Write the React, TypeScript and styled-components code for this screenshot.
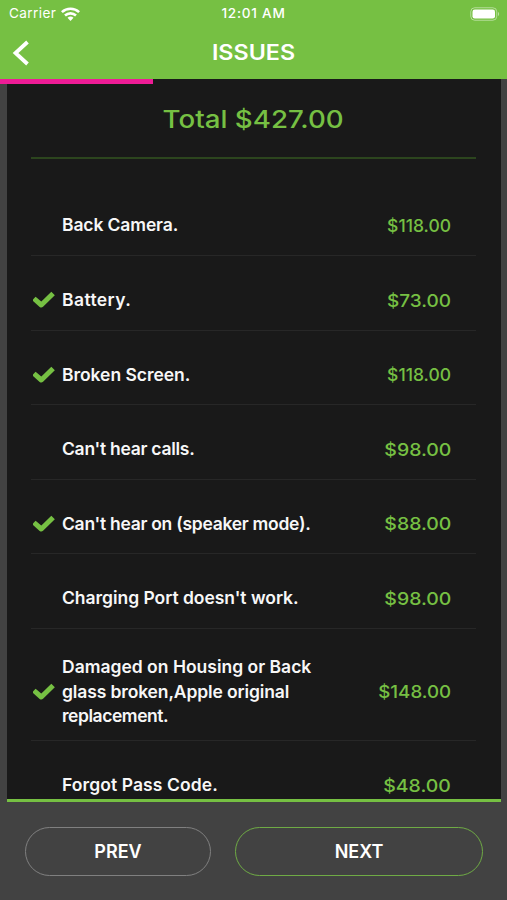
import React from "react";
import styled, { createGlobalStyle } from "styled-components";

const GREEN = "#76c043";

const GlobalStyle = createGlobalStyle`
  * { box-sizing: border-box; }
  body { margin: 0; background: #424242; font-family: "Inter", "Liberation Sans", sans-serif; }
`;

const Screen = styled.div`
  width: 507px;
  height: 900px;
  display: flex;
  flex-direction: column;
  overflow: hidden;
  background: #424242;
`;

const Header = styled.header`
  flex: none;
  height: 79px;
  background: ${GREEN};
  color: #fff;
`;

const StatusBar = styled.div`
  display: grid;
  grid-template-columns: 1fr auto 1fr;
  align-items: center;
  height: 27px;
  padding: 0 7px 0 9px;
  font: 500 13.6px/27px "Inter", sans-serif;
`;

const Carrier = styled.div`
  display: flex;
  align-items: center;
  gap: 5px;
  font-weight: 400;
  letter-spacing: 0.38px;
`;

const Clock = styled.div`
  margin-left: -2px;
  letter-spacing: 0.75px;
`;

const BatterySlot = styled.div`
  display: flex;
  justify-content: flex-end;
`;

const TitleBar = styled.div`
  display: grid;
  grid-template-columns: 40px 1fr 40px;
  align-items: center;
  height: 50px;
`;

const BackButton = styled.button`
  display: flex;
  padding: 0 0 0 12px;
  border: 0;
  background: none;
`;

const Title = styled.h1`
  margin: 0;
  text-align: center;
  font-size: 21px;
  font-weight: 600;
  line-height: 51px;
`;

const Content = styled.main`
  flex: none;
  height: 723px;
  margin: 0 6px 0 7px;
  padding: 0 25px 0 24px;
  border-bottom: 3px solid ${GREEN};
  background: #191919;
  overflow: hidden;
`;

const Progress = styled.div`
  position: absolute;
  z-index: 1;
  top: 79px;
  left: 0;
  width: 153px;
  height: 5px;
  background: #ee1c96;
`;

const Total = styled.div`
  height: 80px;
  border-bottom: 2px solid #2c451e;
  color: ${GREEN};
  text-align: center;
  font-size: 24.5px;
  font-weight: 500;
  line-height: 80px;
`;

const List = styled.ul`
  margin: 0;
  padding: 22.6px 0 0;
  list-style: none;
`;

const Row = styled.li`
  display: grid;
  grid-template-columns: 31px 270px 1fr;
  align-items: center;
  min-height: 74.55px;
  padding: 26.3px 25px 11.7px 0;
  border-bottom: 1px solid #272727;
`;

const CheckSlot = styled.div`
  display: flex;
  padding-left: 2px;
`;

const Label = styled.div`
  color: #f7f7f7;
  font-size: 17.5px;
  font-weight: 600;
  line-height: 24.5px;
`;

const Line = styled.span<{ $spacing: number }>`
  display: block;
  white-space: nowrap;
  letter-spacing: ${(p) => p.$spacing}px;
`;

const Wide = styled.span<{ $stretch: number; $origin?: string }>`
  display: inline-block;
  transform: scaleX(${(p) => p.$stretch});
  transform-origin: ${(p) => p.$origin ?? "center"};
`;

const Price = styled.div`
  color: ${GREEN};
  text-align: right;
  white-space: nowrap;
  font-size: 17.5px;
  font-weight: 550;
`;

const Footer = styled.footer`
  display: grid;
  grid-template-columns: 186px 248px;
  gap: 24px;
  padding: 25px 24px 24px 25px;
`;

const PillButton = styled.button<{ $primary?: boolean }>`
  height: 49px;
  padding: 0;
  border: 1.5px solid ${(p) => (p.$primary ? "#6fab45" : "#808080")};
  border-radius: 25px;
  background: transparent;
  color: #fff;
  font: 600 18px "Inter", sans-serif;
`;

const Check = () => (
  <svg width="22" height="18" viewBox="0 0 22 18">
    <path d="M2.8 9.2 8.3 14 18.3 4.2" fill="none" stroke={GREEN} strokeWidth="5" strokeLinejoin="round" strokeLinecap="square" />
  </svg>
);

const Wifi = () => (
  <svg width="19" height="14" viewBox="0 0 19 14" fill="none" stroke="#fff" strokeWidth="2.6">
    <path d="M.9 5.1C5.7.6 13.3.6 18.1 5.1" />
    <path d="M4 8.5C7.2 5.6 11.8 5.6 15 8.5" />
    <path d="M6.5 10.8Q9.5 8.1 12.5 10.8L9.5 13.9Z" fill="#fff" stroke="none" />
  </svg>
);

const Battery = () => (
  <svg width="30" height="14" viewBox="0 0 30 14">
    <rect x=".75" y=".75" width="26" height="12.5" rx="4" fill="none" stroke="#fff" strokeOpacity=".45" />
    <rect x="2.5" y="2.5" width="22.5" height="9" rx="2.3" fill="#fff" />
    <path d="M28 5v4c1.5-.5 1.5-3.5 0-4" fill="#fff" fillOpacity=".5" />
  </svg>
);

interface Issue {
  lines: { text: string; spacing: number }[];
  price: string;
  stretch: number;
  checked?: boolean;
}

const issues: Issue[] = [
  { lines: [{ text: "Back Camera.", spacing: -0.12 }], price: "$118.00", stretch: 1 },
  { lines: [{ text: "Battery.", spacing: 0.4 }], price: "$73.00", stretch: 1.085, checked: true },
  { lines: [{ text: "Broken Screen.", spacing: -0.05 }], price: "$118.00", stretch: 1, checked: true },
  { lines: [{ text: "Can't hear calls.", spacing: -0.27 }], price: "$98.00", stretch: 1.11 },
  { lines: [{ text: "Can't hear on (speaker mode).", spacing: -0.28 }], price: "$88.00", stretch: 1.11, checked: true },
  { lines: [{ text: "Charging Port doesn't work.", spacing: -0.04 }], price: "$98.00", stretch: 1.11 },
  {
    lines: [
      { text: "Damaged on Housing or Back", spacing: 0 },
      { text: "glass broken,Apple original", spacing: -0.13 },
      { text: "replacement.", spacing: -0.45 },
    ],
    price: "$148.00",
    stretch: 1.07,
    checked: true,
  },
  { lines: [{ text: "Forgot Pass Code.", spacing: 0.09 }], price: "$48.00", stretch: 1.11 },
];

export default function App() {
  return (
    <Screen>
      <GlobalStyle />
      <Header>
        <StatusBar>
          <Carrier>Carrier <Wifi /></Carrier>
          <Clock>12:01 AM</Clock>
          <BatterySlot><Battery /></BatterySlot>
        </StatusBar>
        <TitleBar>
          <BackButton aria-label="Back">
            <svg width="18" height="26" viewBox="0 0 18 26">
              <path d="M15.5 2 3.5 13l12 11" fill="none" stroke="#fff" strokeWidth="3.8" />
            </svg>
          </BackButton>
          <Title><Wide $stretch={1.11}>ISSUES</Wide></Title>
        </TitleBar>
      </Header>
      <Progress />
      <Content>
        <Total><Wide $stretch={1.13}>Total $427.00</Wide></Total>
        <List>
          {issues.map((issue) => (
            <Row key={issue.lines[0].text}>
              <CheckSlot>{issue.checked && <Check />}</CheckSlot>
              <Label>
                {issue.lines.map((line) => (
                  <Line key={line.text} $spacing={line.spacing}>{line.text}</Line>
                ))}
              </Label>
              <Price><Wide $stretch={issue.stretch} $origin="right">{issue.price}</Wide></Price>
            </Row>
          ))}
        </List>
      </Content>
      <Footer>
        <PillButton>PREV</PillButton>
        <PillButton $primary>NEXT</PillButton>
      </Footer>
    </Screen>
  );
}
